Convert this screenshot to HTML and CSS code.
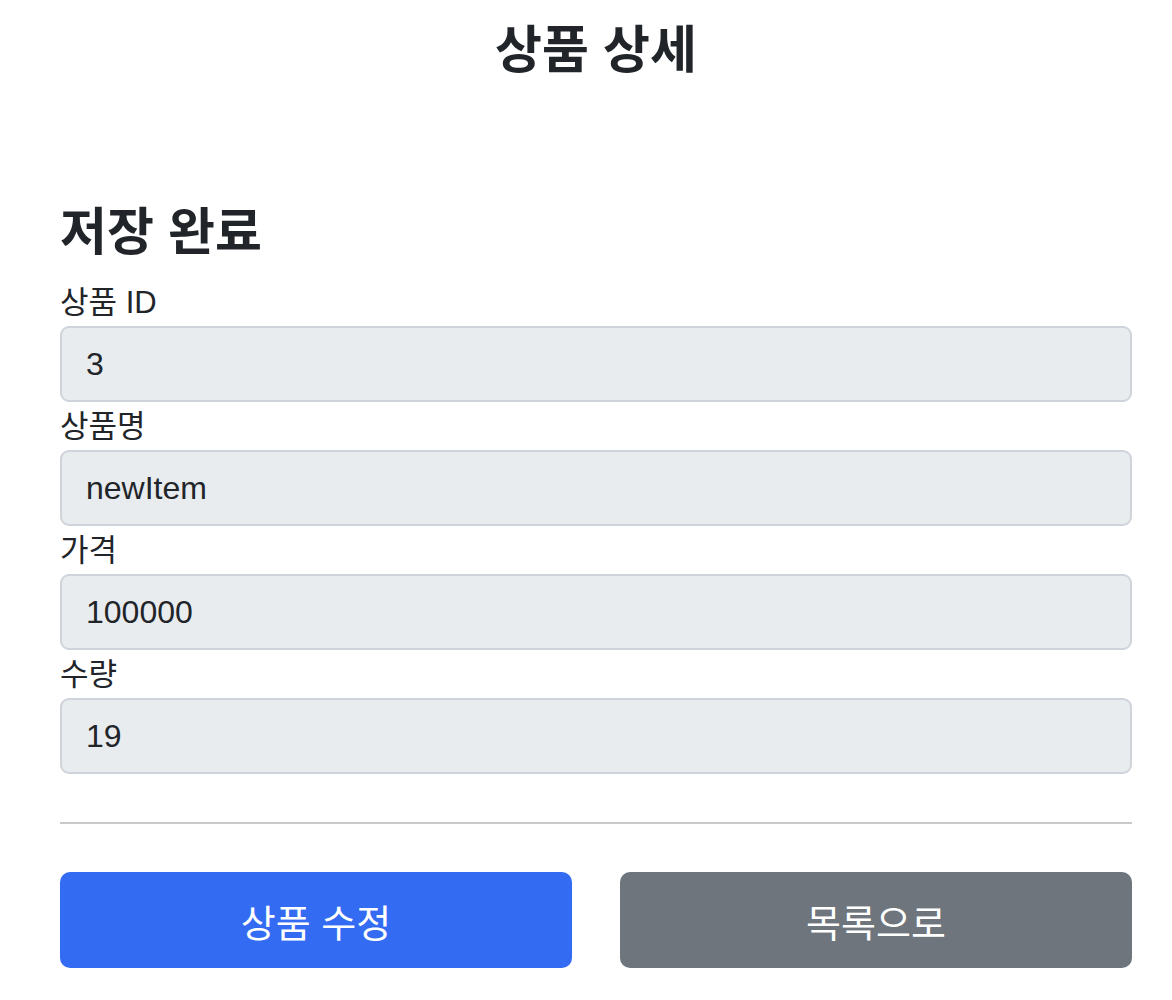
FILE: index.html
```html
<!DOCTYPE html>
<html lang="ko">
<head>
<meta charset="utf-8">
<title>상품 상세</title>
<link rel="stylesheet" href="styles.css">
</head>
<body>
<div class="container">
  <div class="page-header">
    <h2 class="page-title">상품 상세</h2>
  </div>
  <h2 class="status">저장 완료</h2>
  <div class="field">
    <label class="label" for="itemId">상품 ID</label>
    <input class="input" id="itemId" type="text" value="3" readonly>
  </div>
  <div class="field">
    <label class="label" for="itemName">상품명</label>
    <input class="input" id="itemName" type="text" value="newItem" readonly>
  </div>
  <div class="field">
    <label class="label" for="price">가격</label>
    <input class="input" id="price" type="text" value="100000" readonly>
  </div>
  <div class="field">
    <label class="label" for="quantity">수량</label>
    <input class="input" id="quantity" type="text" value="19" readonly>
  </div>
  <hr class="divider">
  <div class="actions">
    <button class="btn btn-primary" type="button">상품 수정</button>
    <button class="btn btn-secondary" type="button">목록으로</button>
  </div>
</div>
</body>
</html>
```
FILE: styles.css
```css
* { box-sizing: border-box; }
html, body {
  margin: 0;
  padding: 0;
  background: #ffffff;
}
body {
  font-family: "Liberation Sans", "Noto Sans CJK KR", sans-serif;
  color: #212529;
}
.container {
  width: 1072px;
  margin-left: 60px;
  display: flex;
  flex-direction: column;
}
.page-header {
  padding-top: 19px;
  text-align: center;
}
.page-title,
.status {
  margin: 0;
  font-size: 51px;
  line-height: 64px;
  font-weight: 700;
  color: #212529;
}
.status {
  margin-top: 118px;
  margin-bottom: 13px;
}
.field {
  display: flex;
  flex-direction: column;
}
.label {
  font-size: 31px;
  line-height: 48px;
  padding-top: 1px;
  height: 48px;
  color: #212529;
}
.input {
  height: 76px;
  width: 100%;
  padding: 0 24px;
  font-family: inherit;
  font-size: 32px;
  color: #212529;
  background: #e9ecef;
  border: 2px solid #ced4da;
  border-radius: 9px;
  outline: none;
}
.divider {
  margin: 48px 0;
  border: 0;
  border-top: 2px solid #c8c9cb;
  height: 0;
}
.actions {
  display: grid;
  grid-template-columns: 1fr 1fr;
  gap: 48px;
}
.btn {
  height: 96px;
  border: 0;
  border-radius: 10px;
  font-family: inherit;
  font-size: 38px;
  color: #ffffff;
  cursor: pointer;
}
.btn-primary { background: #336cf3; }
.btn-secondary { background: #6e757d; }
```
